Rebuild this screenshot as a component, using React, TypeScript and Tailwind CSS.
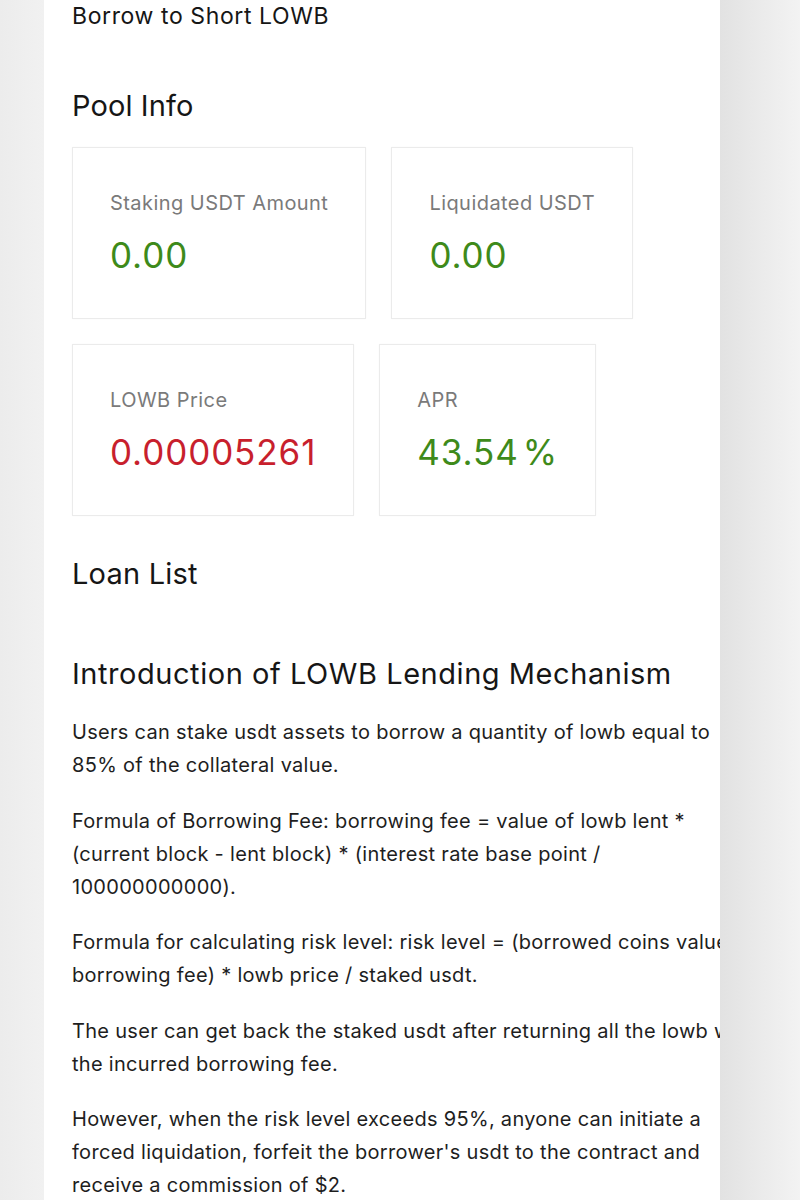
const stats = [
  [
    { label: "Staking USDT Amount", value: "0.00", tone: "green" },
    { label: "Liquidated USDT", value: "0.00", tone: "green" },
  ],
  [
    { label: "LOWB Price", value: "0.00005261", tone: "red" },
    { label: "APR", value: "43.54\u200a%", tone: "green" },
  ],
];

const intro = [
  [
    "Users can stake usdt assets to borrow a quantity of lowb equal to",
    "85% of the collateral value.",
  ],
  [
    "Formula of Borrowing Fee: borrowing fee = value of lowb lent *",
    "(current block - lent block) * (interest rate base point /",
    "100000000000).",
  ],
  [
    "Formula for calculating risk level: risk level = (borrowed coins value +",
    "borrowing fee) * lowb price / staked usdt.",
  ],
  [
    "The user can get back the staked usdt after returning all the lowb with",
    "the incurred borrowing fee.",
  ],
  [
    "However, when the risk level exceeds 95%, anyone can initiate a",
    "forced liquidation, forfeit the borrower's usdt to the contract and",
    "receive a commission of $2.",
  ],
];

const StatCard = ({ label, value, tone }: { label: string; value: string; tone: string }) => (
  <div className="border border-[#ebebeb] bg-white px-[37px] pt-[41px] pb-[43px] shadow-[0_0_2px_rgba(0,0,0,0.03)]">
    <div className="text-[20px] leading-7 tracking-[0.45px] text-[#7a7a7a] whitespace-nowrap">{label}</div>
    <div
      className={`mt-[18px] text-[35px] leading-10 tracking-[0.9px] whitespace-nowrap ${
        tone === "red" ? "text-[#c81f2d]" : "text-[#3e8a1a]"
      }`}
    >
      {value}
    </div>
  </div>
);

export default function App() {
  return (
    <div className="flex h-[1200px] w-[800px] overflow-hidden font-['Inter','Liberation_Sans',sans-serif]">
      <div className="w-[44px] shrink-0 bg-gradient-to-r from-[#ececec] to-[#f1f1f1]" />
      <main className="w-[676px] shrink-0 overflow-hidden bg-white pl-[28px]">
        <h2 className="mt-[2px] text-[23px] leading-7 tracking-[0.6px] text-[#161616]">Borrow to Short LOWB</h2>

        <h1 className="mt-[58px] text-[29px] leading-9 tracking-[0.1px] text-[#161616]">Pool Info</h1>

        <div className="mt-[23px] flex flex-col gap-[25px]">
          {stats.map((row, i) => (
            <div key={i} className="flex gap-[25px]">
              {row.map((s) => (
                <StatCard key={s.label} {...s} />
              ))}
            </div>
          ))}
        </div>

        <h1 className="mt-[40px] text-[29px] leading-9 tracking-[0.2px] text-[#161616]">Loan List</h1>

        <h1 className="mt-[64px] text-[29px] leading-9 tracking-[0.55px] text-[#161616]">
          Introduction of LOWB Lending Mechanism
        </h1>

        <div className="mt-[24px] flex flex-col gap-[22.5px] text-[20px] leading-[33px] tracking-[0.3px] text-[#1e1e1e]">
          {intro.map((p, i) => (
            <p key={i} className="whitespace-nowrap">
              {p.map((line, j) => (
                <span key={j} className="block">
                  {line}
                </span>
              ))}
            </p>
          ))}
        </div>
      </main>
      <div className="flex-1 bg-gradient-to-r from-[#e2e2e2] to-[#f3f3f3]" />
    </div>
  );
}
